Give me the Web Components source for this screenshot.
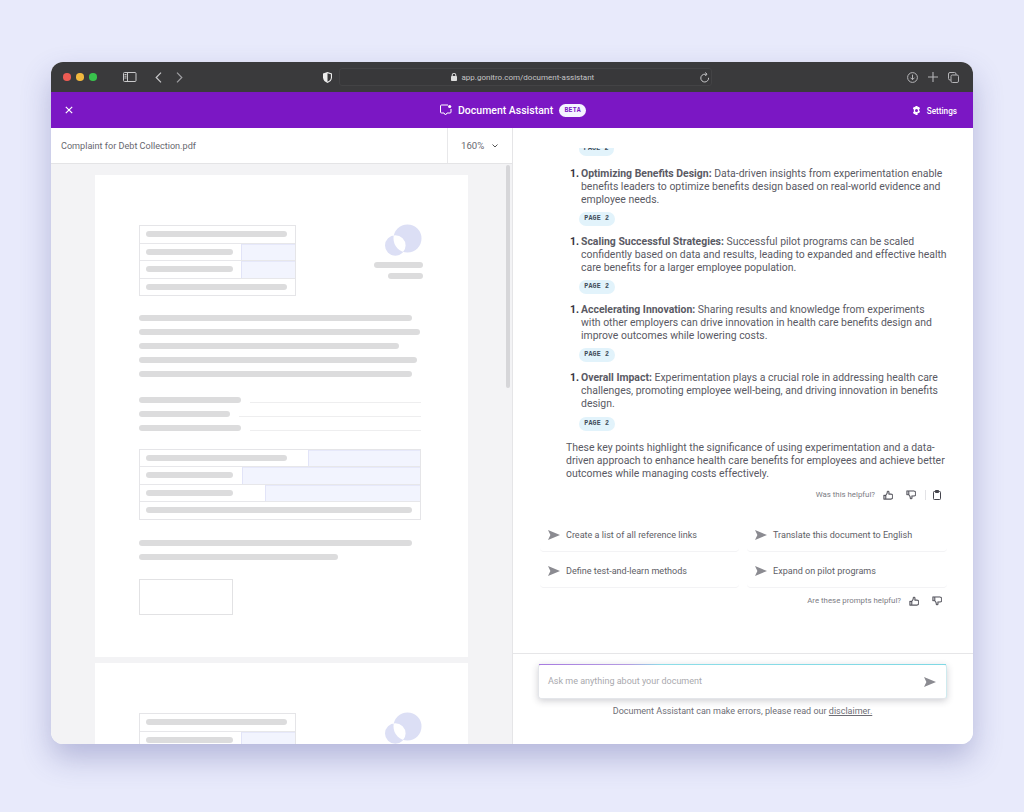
<!DOCTYPE html>
<html lang="en"><head><meta charset="utf-8"><title>Document Assistant</title>
<style>
html,body{margin:0;padding:0;height:812px;overflow:hidden;background:#e8eafb;font-family:Roboto,"Liberation Sans",sans-serif;}
body{display:flex;justify-content:flex-start;align-items:flex-start;padding:62px 0 0 51px;box-sizing:border-box;}
</style></head><body>
<app-window>
  <browser-bar></browser-bar>
  <assistant-header></assistant-header>
  <split-view>
    <pdf-viewer slot="left"></pdf-viewer>
    <chat-panel slot="right"></chat-panel>
  </split-view>
</app-window>
<script>
const def=(name,html,setup)=>customElements.define(name,class extends HTMLElement{
  constructor(){super();this.attachShadow({mode:'open'}).innerHTML=html;}
  connectedCallback(){if(setup)setup(this);}
});
const FONT='Roboto,"Liberation Sans",sans-serif';
const THUMB='M26,12H20V6a3,3,0,0,0-3-3H14.87a2,2,0,0,0-1.98,1.72l-.85,5.92L8.46,16H2V30H25a7,7,0,0,0,7-7V18A6,6,0,0,0,26,12ZM8,28H4V18H8Zm22-5a5,5,0,0,1-5,5H10V17.3l3.96-5.94L14.87,5H17a1,1,0,0,1,1,1v8h8a4,4,0,0,1,4,4Z';
const SEND='<svg width="12" height="10" viewBox="0 0 12 10"><path d="M0 0L12 5L0 10L2.4 5Z" fill="#8b8b91"/></svg>';

def('app-window',`<style>:host{display:flex;flex-direction:column;width:922px;height:682px;border-radius:12px;overflow:hidden;background:#fff;box-shadow:0 14px 30px rgba(70,75,150,.32);}</style><slot></slot>`);

def('browser-bar',`<style>
:host{display:flex;align-items:center;height:30px;background:#3a3a3c;flex:none;color:#c9c9cb;padding-left:12px;}
i{display:block;width:7.5px;height:7.5px;border-radius:50%;margin-right:5px}
svg{display:block;flex:none}
.url{width:373px;height:18px;box-sizing:border-box;margin-left:7px;border:1px solid #434345;background:#38383a;border-radius:3px;display:flex;align-items:center;padding-left:111px;font:8px ${FONT};color:#c4c4c6;position:relative}
.url span{margin-left:5px;white-space:nowrap}
.url svg:last-child{position:absolute;right:1px;top:3px}
</style>
<i style="background:#ec5b53;margin-right:5.5px"></i><i style="background:#f1b83e;margin-right:5.5px"></i><i style="background:#38c24c;margin-right:0"></i>
<svg style="margin-left:26px" width="14" height="10" viewBox="0 0 14 10" fill="none" stroke="#c9c9cb"><rect x=".5" y=".5" width="12.5" height="9" rx="1"/><path d="M4.5 .5v9M1.5 2.5h2M1.5 4.2h2M1.5 6h2"/></svg>
<svg style="margin-left:18px" width="7" height="11" viewBox="0 0 7 11" fill="none" stroke="#c9c9cb" stroke-width="1.2"><path d="M6 .7L1.2 5.5L6 10.3"/></svg>
<svg style="margin-left:14px" width="7" height="11" viewBox="0 0 7 11" fill="none" stroke="#a0a0a3" stroke-width="1.2"><path d="M1 .7L5.8 5.5L1 10.3"/></svg>
<svg style="margin-left:140px" width="9" height="11" viewBox="0 0 9 11"><path d="M4.5 0L9 1.5V5.5C9 8.2 6.8 10 4.5 11C2.2 10 0 8.2 0 5.5V1.5Z" fill="#eee"/><path d="M4.5 1.2V9.8C6.2 9 7.9 7.6 7.9 5.5V2.3Z" fill="#3a3a3c"/></svg>
<div class="url"><svg width="6" height="8" viewBox="0 0 6 8"><rect y="3" width="6" height="5" rx=".8" fill="#ddd"/><path d="M1.2 3.5V2a1.8 1.8 0 013.6 0v1.5" fill="none" stroke="#ddd"/></svg><span>app.gonitro.com/document-assistant</span>
<svg width="10" height="11" viewBox="0 0 10 11" fill="none" stroke="#c9c9cb"><path d="M8.6 5.8A3.9 3.9 0 1 1 5 2.2h1.6"/><path d="M5.3 .5l1.7 1.7L5.3 4"/></svg></div>
<svg style="margin-left:195px" width="11" height="11" viewBox="0 0 11 11" fill="none" stroke="#b5b5b8"><circle cx="5.5" cy="5.5" r="4.9"/><path d="M5.5 2.6v5M3.5 5.7l2 2 2-2"/></svg>
<svg style="margin-left:10px" width="10" height="10" viewBox="0 0 10 10" stroke="#b5b5b8" stroke-width="1.1"><path d="M5 0v10M0 5h10"/></svg>
<svg style="margin-left:10px" width="11" height="11" viewBox="0 0 11 11" fill="none" stroke="#b5b5b8"><rect x="3" y="3" width="7.5" height="7.5" rx="1.4"/><path d="M2.8 8H2a1.5 1.5 0 01-1.5-1.5V2A1.5 1.5 0 012 .5h4.5A1.5 1.5 0 018 2v.8"/></svg>`);

def('assistant-header',`<style>
:host{display:block;height:36px;background:#7b17c4;color:#fff;flex:none;position:relative}
.row{display:flex;align-items:center;height:100%;padding:0 16px 0 14px}
.title{display:flex;align-items:center;margin-left:367px;font:500 10.5px ${FONT};white-space:nowrap}
.beta{font:700 6.5px "Liberation Mono",monospace;color:#7b17c4;background:#f4f4ff;border-radius:7px;height:13px;width:27px;display:flex;align-items:center;justify-content:center;margin-left:6px;letter-spacing:.2px}
.set{margin-left:auto;display:flex;align-items:center;font:500 8.2px ${FONT};white-space:nowrap;padding-top:1px}
svg{display:block;flex:none}
</style><div class="row">
<svg width="8" height="8" viewBox="0 0 8 8" stroke="#fff" stroke-width="1.2"><path d="M.8.8l6.4 6.4M7.2.8L.8 7.2"/></svg>
<div class="title"><svg width="12" height="12" viewBox="0 0 12 12" fill="none" stroke="#fff" style="margin-right:6px"><path d="M8 1H1.5a1 1 0 00-1 1v6a1 1 0 001 1H4l1.5 2L7 9h3a1 1 0 001-1V5"/><circle cx="9.7" cy="2.5" r="1.6" fill="#fff" stroke="none"/></svg>Document Assistant<span class="beta">BETA</span></div>
<div class="set"><svg width="9" height="9" viewBox="0 0 9 9" style="margin-right:6px"><path fill="#fff" fill-rule="evenodd" d="M3.5 0h2l.3 1.2 1.2-.4 1 1.7-.9.9.1 1.2.8.9-1 1.7-1.2-.4L5.5 9h-2l-.3-1.2-1.2.4-1-1.7.9-.9L1.8 3.4l-.9-.9 1-1.7 1.2.4ZM4.5 3a1.5 1.5 0 100 3 1.5 1.5 0 000-3Z"/></svg>Settings</div>
</div>`);

def('split-view',`<style>:host{display:flex;flex:1;min-height:0}
::slotted([slot=left]){width:461px;flex:none}
::slotted([slot=right]){flex:1;min-width:0}</style><slot name="left"></slot><slot name="right"></slot>`);

def('pdf-viewer',`<style>
:host{display:flex;flex-direction:column;border-right:1px solid #e5e5e7;min-height:0;overflow:hidden;position:relative}
.bar{display:flex;height:36px;flex:none;box-sizing:border-box;border-bottom:1px solid #e4e4e6;font:9.1px ${FONT};color:#68686f;align-items:stretch;background:#fff}
.name{flex:1;display:flex;align-items:center;padding-left:10px}
.zoom{width:65px;box-sizing:border-box;border-left:1px solid #e8e8ea;display:flex;align-items:center;padding-left:13px;gap:8px;font-size:9.6px}
.pages{flex:1;background:#f3f3f5;padding:11px 0 0 44px;display:flex;flex-direction:column;gap:6px;overflow:hidden}
.thumb{position:absolute;right:2px;top:37px;width:4px;height:223px;border-radius:2px;background:#d6d6d9}
</style>
<div class="bar"><div class="name">Complaint for Debt Collection.pdf</div><div class="zoom">160%<svg width="6" height="4" viewBox="0 0 6 4" fill="none" stroke="#555" stroke-width="1"><path d="M.5.5L3 3 5.5.5"/></svg></div></div>
<div class="pages"><doc-page full></doc-page><doc-page></doc-page></div><div class="thumb"></div>`);

const bar=(w)=>`<div class="b" style="width:${w}px"></div>`;
const tRow=(w,blue)=>`<div class="r"><div class="c">${bar(w)}</div>${blue?`<div class="blue" style="width:${blue}px"></div>`:''}</div>`;
def('doc-page',`<style>
:host{display:block;width:373px;flex:none;background:#fff;box-sizing:border-box;padding:50px 45px 0 44px}
:host([full]){height:482px}
.b{height:6px;border-radius:3px;background:#dcdcdd;flex:none}
.head{display:flex;justify-content:space-between}
.t{border:1px solid #e5e5e8;display:flex;flex-direction:column;box-sizing:border-box}
.t1{width:157px;height:71px}.t2{width:282px;height:71px;margin-top:18px}
.r{flex:1;display:flex;border-top:1px solid #e7e7ea;min-height:0}.r:first-child{border-top:0}
.c{flex:1;display:flex;align-items:center;padding-left:6px}
.blue{box-sizing:border-box;background:#f2f4fe;border-left:1px solid #e2e4f8;box-shadow:inset 0 1px #e6e8fa}
.logo{display:flex;flex-direction:column;align-items:flex-end;margin-top:-1px}
.logo svg{display:block;margin-right:.5px}
.logo .b:nth-of-type(1){margin-top:5px}.logo .b:nth-of-type(2){margin-top:5px}
.p{display:flex;flex-direction:column;gap:8px}
.f{display:flex;flex-direction:column;gap:8px;margin-top:19.5px}
.fr{display:flex;gap:9px;width:282px}.fr u{flex:1;display:block;height:2px;margin-top:3px;border-bottom:1px solid #eeeeef}
.box{width:94px;height:36.5px;box-sizing:border-box;border:1px solid #e2e2e4;margin-top:19px}
</style>
<div class="head"><div class="t t1">${tRow(141)}${tRow(87,54)}${tRow(87,54)}${tRow(141)}</div>
<div class="logo"><svg width="38" height="33" viewBox="0 0 38 33"><path fill="#dcdff5" fill-rule="evenodd" d="M8.5 14.5a14 14 0 1 0 28 0a14 14 0 1 0 -28 0ZM0 21.5a10.3 10.3 0 1 0 20.6 0a10.3 10.3 0 1 0 -20.6 0Z"/></svg>${bar(49)}${bar(35)}</div></div>
<div id="rest"></div>`,(el)=>{
  if(!el.hasAttribute('full')) return;
  el.shadowRoot.getElementById('rest').innerHTML=`
  <div class="p" style="margin-top:19px">${bar(273)}${bar(281)}${bar(260)}${bar(278)}${bar(273)}</div>
  <div class="f"><div class="fr">${bar(102)}<u></u></div><div class="fr">${bar(91)}<u></u></div><div class="fr">${bar(102)}<u></u></div></div>
  <div class="t t2">${tRow(141,112)}${tRow(87,178)}${tRow(87,155)}${tRow(266)}</div>
  <div class="p" style="margin-top:20px">${bar(273)}${bar(199)}</div>
  <div class="box"></div>`;
});

def('page-pill',`<style>:host{display:block;width:35.5px;height:14px;border-radius:7px;background:#e2f3fb;color:#3f4c58;font:700 6.6px/14px "Liberation Mono",monospace;text-align:center;letter-spacing:.2px;flex:none}</style>PAGE 2`);

def('answer-item',`<style>
:host{display:grid;grid-template-columns:13px 1fr;column-gap:2px;padding-left:0;margin:0 0 8.7px 0;font:10.45px/13px ${FONT};color:#5a5a64}
.n{font-weight:700;color:#33333e;text-align:right}
b{color:#33333e;font-weight:600}
page-pill{margin:6.5px 0 0 -2px}
</style><span class="n">1.</span><div><slot></slot><page-pill></page-pill></div>`);

def('help-row',`<style>
:host{display:flex;align-items:center;justify-content:flex-end;height:14px;font:7.85px ${FONT};color:#7c7c84}
svg{display:block;flex:none}
.d{width:1px;height:10px;background:#e3e3e6;margin-left:9px}
</style><span id="l"></span><svg width="10" height="10" viewBox="0 0 32 32" style="margin-left:8px"><path fill="#44444c" stroke="#44444c" d="${THUMB}"/></svg><svg width="10" height="10" viewBox="0 0 32 32" style="margin-left:13px;transform:scaleY(-1)"><path fill="#44444c" stroke="#44444c" d="${THUMB}"/></svg><span id="x" style="display:contents"></span>`,(el)=>{
  el.shadowRoot.getElementById('l').textContent=el.getAttribute('label');
  if(el.hasAttribute('copy')) el.shadowRoot.getElementById('x').innerHTML=`<div class="d"></div><svg width="8" height="10" viewBox="0 0 8 10" fill="none" stroke="#44444c" style="margin-left:7px"><rect x=".5" y="1.5" width="7" height="8" rx=".8"/><path d="M2.5.5h3v2h-3z" fill="#44444c"/></svg>`;
});

def('prompt-chip',`<style>
:host{display:flex;align-items:center;height:36px;box-sizing:border-box;padding:3px 0 0 8px;gap:6px;border-bottom:1px solid #f3f3f5;border-radius:0 0 4px 4px;font:9.05px ${FONT};color:#5e5e66;white-space:nowrap}
</style>${SEND}<slot></slot>`);

def('chat-input',`<style>
:host{display:flex;align-items:center;height:35px;box-sizing:border-box;border:1px solid #e4e6ea;border-right-color:#cfeaee;border-radius:3px;background:#fff;box-shadow:0 2px 7px rgba(40,40,60,.22);position:relative;padding:0 10px 0 9px;font:9px ${FONT};color:#a9a9ae;justify-content:space-between}
:host::before{content:"";position:absolute;left:0;right:0;top:-1px;height:1px;background:linear-gradient(90deg,#a77be0 0,#b49be2 22%,#8ddde8 30%,#7fd8e4 100%)}
</style><span style="padding-bottom:1px">Ask me anything about your document</span>${SEND}`);

def('chat-panel',`<style>
:host{display:flex;flex-direction:column;min-height:0;background:#fff}
.scroll{height:526px;box-sizing:border-box;padding-top:20px;border-bottom:1px solid #e6e6e8;flex:none}
.clip{height:100%;overflow:hidden;padding:0 26px 0 53px;box-sizing:border-box}
.first{margin:-6.5px 0 11px 12.5px}
p{margin:10px 0 0;font:10.45px/13px ${FONT};color:#5a5a64}
.fb{margin-top:8px;padding-right:6px}
.grid{display:grid;grid-template-columns:199px 200px;column-gap:8px;margin:14px 0 0 -26px}
.fb2{margin-top:6px;padding-right:5px}
.foot{flex:1;padding:10px 26px 0 25px}
.note{font:9px ${FONT};color:#6d6d75;text-align:center;margin-top:7px}
.note u{color:#6d6d75}
</style>
<div class="scroll"><div class="clip">
<page-pill class="first"></page-pill>
<answer-item><b>Optimizing Benefits Design:</b> Data-driven insights from experimentation enable<br>benefits leaders to optimize benefits design based on real-world evidence and employee needs.</answer-item>
<answer-item><b>Scaling Successful Strategies:</b> Successful pilot programs can be scaled<br>confidently based on data and results, leading to expanded and effective health care benefits for a larger employee population.</answer-item>
<answer-item><b>Accelerating Innovation:</b> Sharing results and knowledge from experiments<br>with other employers can drive innovation in health care benefits design and improve outcomes while lowering costs.</answer-item>
<answer-item><b>Overall Impact:</b> Experimentation plays a crucial role in addressing health care<br>challenges, promoting employee well-being, and driving innovation in benefits design.</answer-item>
<p>These key points highlight the significance of using experimentation and a data-driven approach to enhance health care benefits for employees and achieve better outcomes while managing costs effectively.</p>
<help-row class="fb" label="Was this helpful?" copy></help-row>
<div class="grid"><prompt-chip>Create a list of all reference links</prompt-chip><prompt-chip>Translate this document to English</prompt-chip><prompt-chip>Define test-and-learn methods</prompt-chip><prompt-chip>Expand on pilot programs</prompt-chip></div>
<help-row class="fb2" label="Are these prompts helpful?"></help-row>
</div></div>
<div class="foot"><chat-input></chat-input><div class="note">Document Assistant can make errors, please read our <u>disclaimer.</u></div></div>`);
</script>
</body></html>
